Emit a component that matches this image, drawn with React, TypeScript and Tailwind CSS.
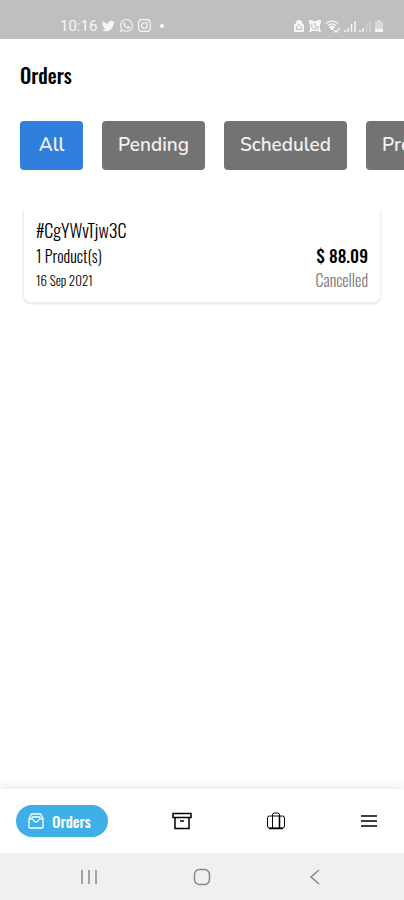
import { BsTwitter, BsWhatsapp, BsInstagram } from "react-icons/bs";

const FILTERS = ["All", "Pending", "Scheduled", "Processing"];

const ORDERS = [
  { id: "#CgYWvTjw3C", products: 1, date: "16 Sep 2021", total: "$ 88.09", status: "Cancelled" },
];

function StatusBar() {
  return (
    <div className="flex h-[39px] items-center justify-between bg-[#bfbfbf] pt-3 pl-15 pr-5 text-white">
      <div className="flex items-center gap-[5px] font-['Roboto',sans-serif] text-[15px] leading-5 text-white/85">
        <span>10:16</span>
        <BsTwitter className="size-[13px]" />
        <BsWhatsapp className="size-[13px]" />
        <BsInstagram className="size-[13px]" />
        <span className="ml-1 size-1 rounded-full bg-white" />
      </div>
      <div className="flex items-center gap-[3px] text-white/85">
        {/* Secure lock */}
        <svg viewBox="0 0 12 14" className="h-[14px] w-3">
          <path d="M3 4q0-3 3-3t3 3l2 2v7H1V6z" fill="currentColor" />
          <path d="M3.500 8 6 5.500 8.500 8v2.500h-5z" fill="none" stroke="#bfbfbf" />
        </svg>
        {/* Alarm */}
        <svg viewBox="0 0 14 14" className="size-[14px]">
          <path d="M1 1h3l1 1h4l1-1h3v3l-1 1v5l1 3h-2l-1-1H4l-1 1H1l1-3V5L1 4z" fill="currentColor" />
          <path d="M4 5q-1.500 5 3 5t3-3M7 4v3l2 1" fill="none" stroke="#bfbfbf" />
        </svg>
        {/* Wi-Fi */}
        <svg viewBox="0 0 16 14" className="h-[14px] w-4" fill="none" stroke="currentColor">
          <path d="M1 4.500q6-5 12 0M3 6.500q4-3 8 0" strokeWidth="1.500" />
          <path d="m4.500 8 2.500 3 2.500-3q-2.500-2-5 0" fill="currentColor" />
          <path d="m9 11 2 2 4-4" strokeWidth="1.500" />
        </svg>
        {/* Signal, first card */}
        <svg viewBox="0 0 12 14" className="h-[14px] w-3" stroke="currentColor" strokeWidth="1.500">
          <path d="M1 13v-2M4 13V9M7.500 13V5M11 13V2" />
        </svg>
        {/* Signal, second card */}
        <svg viewBox="0 0 12 14" className="h-[14px] w-3" stroke="currentColor" strokeWidth="1.500">
          <path d="M1 13v-2M4 13V9" />
          <path d="M7.500 13V5M11 13V2" opacity="0.4" />
        </svg>
        {/* Battery */}
        <svg viewBox="0 0 10 14" className="h-[14px] w-[10px]" fill="currentColor">
          <path d="M3 1h4v2h2v7H1V3h2z" opacity="0.5" />
          <path d="M1 10h8v3H1z" />
        </svg>
      </div>
    </div>
  );
}

function OrderCard({ order }: { order: (typeof ORDERS)[number] }) {
  return (
    <article className="rounded-b-lg border-x border-b border-[#f0f0f0] bg-white px-3 pt-1.5 pb-2.5 font-['Oswald',sans-serif] font-light text-black shadow-[0_1px_2px_rgba(0,0,0,0.12)]">
      <h2 className="text-[18px] leading-7">{order.id}</h2>
      <div className="flex items-center justify-between leading-6">
        <span className="text-[16px]">{order.products} Product(s)</span>
        <span className="text-[17px] font-medium">{order.total}</span>
      </div>
      <div className="flex items-center justify-between leading-6">
        <time className="text-[13px]">{order.date}</time>
        <span className="text-[16px] text-[#777777]">{order.status}</span>
      </div>
    </article>
  );
}

function BottomNav() {
  return (
    <nav className="flex h-16 items-center justify-between bg-white pl-4 pr-[26px] text-black shadow-[0_-3px_8px_rgba(0,0,0,0.08)]">
      <button className="flex h-8 w-23 items-center gap-2 rounded-full bg-[#3eafe8] pl-3 font-['Oswald',sans-serif] text-[15px] font-medium text-white">
        <svg viewBox="0 0 16 16" className="size-4" fill="none" stroke="currentColor" strokeWidth="1.300">
          <path d="M1 5.500 3.500 1h9L15 5.500V14q0 1-1 1H2q-1 0-1-1zM1 5.500l3.500.5Q8 12 11.500 6l3.500-.5M3.500 4h9" />
        </svg>
        Orders
      </button>
      <div className="flex items-center gap-[74px]">
        <button aria-label="Products">
          <svg viewBox="0 0 20 18" className="h-[18px] w-5" fill="none" stroke="currentColor" strokeWidth="1.500">
            <path d="M1 1.500h18v4H1zM3 5.500v11h14v-11M8 9h4" />
          </svg>
        </button>
        <button aria-label="Earnings">
          <svg viewBox="0 0 20 18" className="h-[18px] w-5" fill="none" stroke="currentColor">
            <path d="M6.500 16V3q0-2 2-2h3q2 0 2 2v13M3.500 4h13q2 0 2 2v8q0 2-2 2h-13q-2 0-2-2V6q0-2 2-2z" />
            <path d="M3 16.500h14M13.500 4v12" strokeWidth="1.500" />
          </svg>
        </button>
        <button aria-label="Menu">
          <svg viewBox="0 0 18 14" className="h-[14px] w-[18px]" stroke="currentColor" strokeWidth="1.500">
            <path d="M1 2h16M1 7h16M1 12h16" />
          </svg>
        </button>
      </div>
    </nav>
  );
}

function SystemNav() {
  return (
    <div className="flex h-[47px] items-center justify-between bg-[#f0f0f0] px-20 text-[#888888]">
      <button aria-label="Recent apps">
        <svg viewBox="0 0 18 18" className="size-[18px]" stroke="currentColor" strokeWidth="1.500">
          <path d="M2 2v14M9 2v14M16 2v14" />
        </svg>
      </button>
      <button aria-label="Home">
        <svg viewBox="0 0 18 18" className="size-[18px]" fill="none" stroke="currentColor" strokeWidth="1.500">
          <rect x="1.500" y="1.500" width="15" height="15" rx="5" />
        </svg>
      </button>
      <button aria-label="Back">
        <svg viewBox="0 0 18 18" className="size-[18px]" fill="none" stroke="currentColor" strokeWidth="1.500">
          <path d="m13 2-8 7 8 7" />
        </svg>
      </button>
    </div>
  );
}

export default function App() {
  return (
    <div className="flex min-h-screen flex-col bg-white">
      <StatusBar />
      <main className="flex-1">
        <h1 className="px-5 pt-5 font-['Oswald',sans-serif] text-[20px] leading-8 font-medium text-black">
          Orders
        </h1>
        <div className="mt-[30px] flex gap-[19px] overflow-x-auto pl-5 [scrollbar-width:none]">
          {FILTERS.map((filter, i) => (
            <button
              key={filter}
              className={`h-[49px] shrink-0 rounded-sm px-4 font-['Nunito',sans-serif] text-[19px] font-semibold text-[#f0f0f0] ${
                i === 0 ? "min-w-[63px] bg-[#2f80dc]" : "bg-[#737373]"
              }`}
            >
              {filter}
            </button>
          ))}
        </div>
        <div className="mt-10 px-[23px]">
          {ORDERS.map((order) => (
            <OrderCard key={order.id} order={order} />
          ))}
        </div>
      </main>
      <BottomNav />
      <SystemNav />
    </div>
  );
}
